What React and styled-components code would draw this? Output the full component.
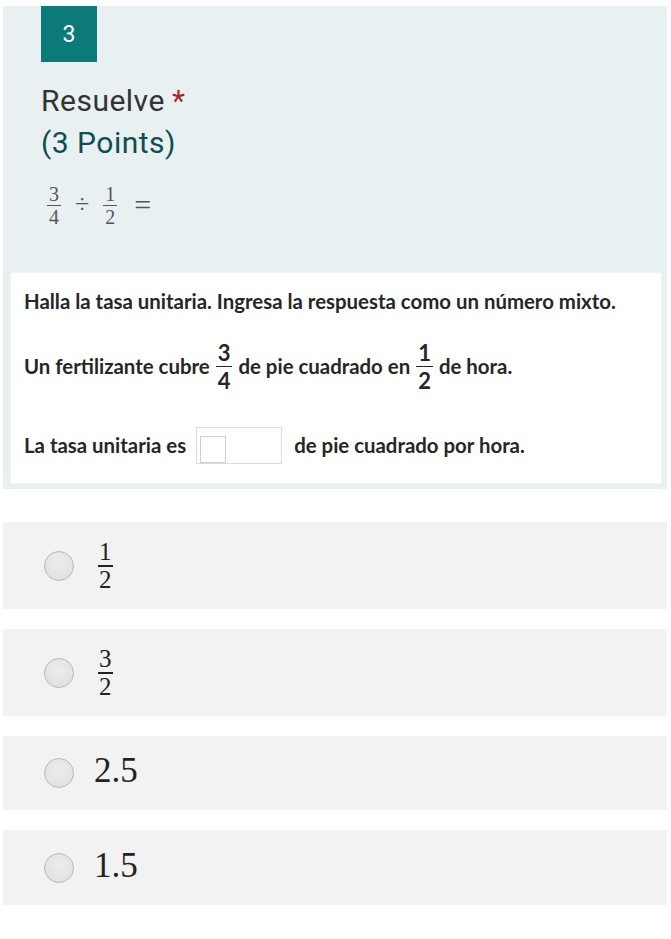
import React from "react";
import styled, { createGlobalStyle } from "styled-components";

const Global = createGlobalStyle`
  html, body { margin: 0; padding: 0; background: #ffffff; }
  body { font-family: Roboto, "Noto Sans", Arial, sans-serif; }
`;

const Page = styled.div`
  width: 671px;
  padding: 6px 4px 30px 3px;
  box-sizing: border-box;
`;

const QuestionCard = styled.section`
  background: #e8f0f2;
  padding: 0 5px 5px 0;
  display: flex;
  flex-direction: column;
`;

const Badge = styled.div`
  width: 56px;
  height: 56px;
  margin-left: 38px;
  background: #0b7a79;
  color: #ffffff;
  font-family: Roboto, Arial, sans-serif;
  font-size: 23px;
  display: flex;
  align-items: center;
  justify-content: center;
`;

const Title = styled.div`
  margin: ${(p) => (p.$first ? 18 : 0)}px 0 0 38px;
  font-family: Roboto, Arial, sans-serif;
  font-size: 30px;
  letter-spacing: 0.5px;
  line-height: 42px;
  color: ${(p) => p.$color};
`;

const Star = styled.span`
  color: #a4262c;
  margin-left: 7px;
`;

const Formula = styled.div`
  margin: 14px 0 0 44px;
  height: 54px;
  display: flex;
  align-items: center;
  gap: 14px;
  font-family: "Liberation Serif", "Times New Roman", serif;
  color: #555555;
`;

const Op = styled.span`
  font-size: ${(p) => p.$size || 24}px;
  line-height: 1;
  margin-left: ${(p) => p.$ml || 0}px;
`;

const FracBox = styled.span`
  display: inline-flex;
  flex-direction: column;
  align-items: center;
  font-family: ${(p) => (p.$sans ? "Lato, 'Open Sans', sans-serif" : "'Liberation Serif', 'Times New Roman', serif")};
  font-weight: ${(p) => (p.$sans ? 700 : 400)};
  font-size: ${(p) => p.$size}px;
  line-height: ${(p) => p.$lh}px;
  color: ${(p) => p.$color};
`;

const Num = styled.span`
  border-bottom: ${(p) => p.$bar}px solid currentColor;
  padding: 0 ${(p) => p.$pad}px ${(p) => p.$gap}px;
  margin-bottom: ${(p) => p.$gap}px;
`;

const Frac = ({ n, d, size = 20, lh = 20, color = "#555", bar = 1, gap = 1, pad = 2, sans }) => (
  <FracBox $size={size} $lh={lh} $color={color} $sans={sans}>
    <Num $bar={bar} $gap={gap} $pad={pad}>{n}</Num>
    <span>{d}</span>
  </FracBox>
);

const ImageFrame = styled.div`
  margin: 40px 0 0 7px;
  height: 212px;
  background: #ffffff;
  box-shadow: inset 0 0 0 1px #f0f3f4;
  padding: 14px 0 0 14px;
  box-sizing: border-box;
  font-family: Lato, "Open Sans", sans-serif;
  font-weight: 700;
  font-size: 20.4px;
  color: #262626;
  display: flex;
  flex-direction: column;
`;

const ProblemLine = styled.div`
  display: flex;
  align-items: center;
  height: ${(p) => p.$h}px;
  gap: 6px;
  white-space: nowrap;
`;

const AnswerBox = styled.span`
  position: relative;
  width: 86px;
  height: 37px;
  border: 1px solid #dcdcdc;
  margin: 0 6px 0 4px;
  box-sizing: border-box;
`;

const InnerBox = styled.span`
  position: absolute;
  left: 3px;
  top: 8px;
  width: 26px;
  height: 27px;
  border: 1.5px solid #cfcfcf;
  box-sizing: border-box;
`;

const Options = styled.div`
  margin-top: 33px;
  display: flex;
  flex-direction: column;
  gap: 20px;
`;

const Option = styled.label`
  height: ${(p) => p.$h}px;
  width: 664px;
  background: #f2f2f2;
  display: flex;
  align-items: center;
  padding-left: 41px;
  box-sizing: border-box;
  gap: ${(p) => p.$gap}px;
  font-family: "Liberation Serif", "Times New Roman", serif;
  color: #222222;
`;

const Radio = styled.span`
  width: 30px;
  height: 30px;
  border-radius: 50%;
  box-sizing: border-box;
  border: 1px solid #b8b8b8;
  background: radial-gradient(circle at 50% 40%, #ececec 0%, #dedede 100%);
  flex: none;
`;

const BigText = styled.span`
  font-size: 35px;
  line-height: 1;
  margin-bottom: 5px;
`;

export default function App() {
  return (
    <>
      <Global />
      <Page>
        <QuestionCard>
          <Badge>3</Badge>
          <Title $first $color="#333333">
            Resuelve<Star>*</Star>
          </Title>
          <Title $color="#0f4d50">(3 Points)</Title>
          <Formula>
            <Frac n="3" d="4" size={20} lh={20} />
            <Op $size={26}>÷</Op>
            <Frac n="1" d="2" size={20} lh={20} />
            <Op $size={30} $ml={3}>=</Op>
          </Formula>
          <ImageFrame>
            <ProblemLine $h={30}>
              Halla la tasa unitaria. Ingresa la respuesta como un número mixto.
            </ProblemLine>
            <ProblemLine $h={100}>
              Un fertilizante cubre
              <Frac n="3" d="4" size={22} lh={23} color="#262626" bar={1} gap={2} pad={2} sans />
              de pie cuadrado en
              <Frac n="1" d="2" size={22} lh={23} color="#262626" bar={1} gap={2} pad={2} sans />
              de hora.
            </ProblemLine>
            <ProblemLine $h={58}>
              La tasa unitaria es
              <AnswerBox>
                <InnerBox />
              </AnswerBox>
              de pie cuadrado por hora.
            </ProblemLine>
          </ImageFrame>
        </QuestionCard>
        <Options>
          <Option $h={87} $gap={24}>
            <Radio />
            <Frac n="1" d="2" size={25} lh={22} color="#222" bar={2} gap={2} pad={1} />
          </Option>
          <Option $h={87} $gap={24}>
            <Radio />
            <Frac n="3" d="2" size={25} lh={22} color="#222" bar={2} gap={2} pad={1} />
          </Option>
          <Option $h={74} $gap={20}>
            <Radio />
            <BigText>2.5</BigText>
          </Option>
          <Option $h={75} $gap={20}>
            <Radio />
            <BigText>1.5</BigText>
          </Option>
        </Options>
      </Page>
    </>
  );
}
